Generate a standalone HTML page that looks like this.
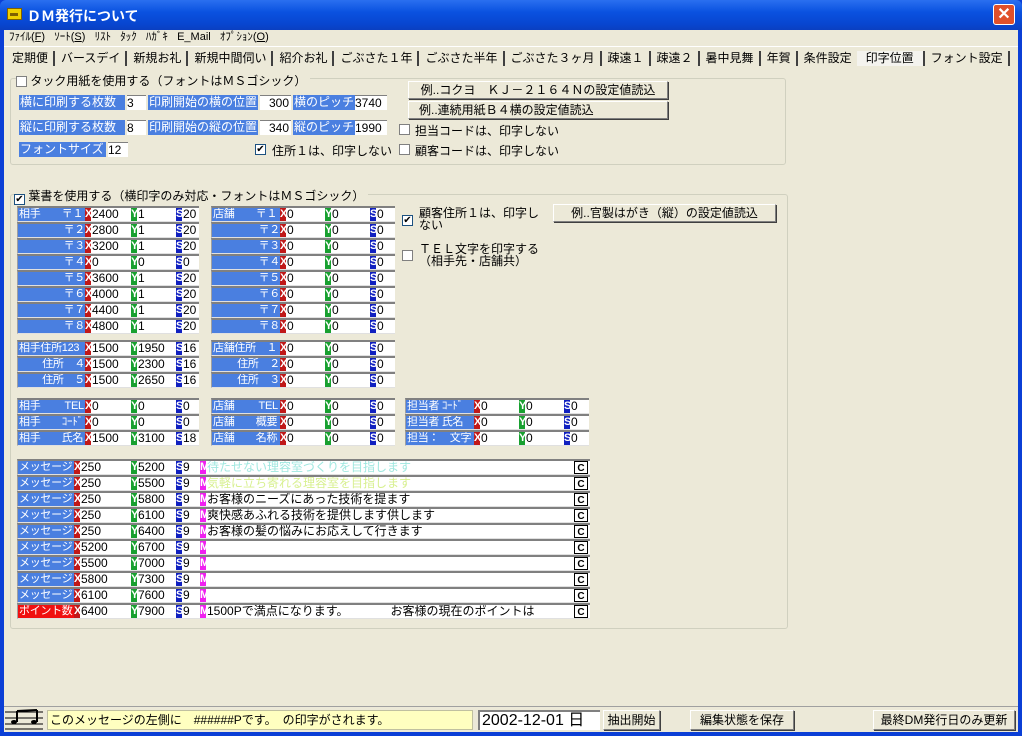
<!DOCTYPE html>
<html><head><meta charset="utf-8">
<style>
*{margin:0;padding:0;box-sizing:border-box}
body{width:1022px;height:736px;overflow:hidden;background:#0b3fd6;font-family:"Liberation Sans","Noto Sans CJK JP",sans-serif;font-size:12px;color:#000;position:relative}
.a{position:absolute;white-space:nowrap}
#win{position:absolute;left:4px;top:30px;width:1014px;height:702px;background:#ece9d8}
#title{position:absolute;left:0;top:0;width:1022px;height:30px;background:linear-gradient(#2a6ff0,#0a52e0 40%,#0846d0 80%,#0a3fc0);border-radius:6px 6px 0 0}
.r{position:absolute;height:16px;background:#fff;border-top:2px solid #808080;border-left:1px solid #a0a0a0;border-bottom:1px solid #e0e0e0;line-height:13px;font-size:12px;white-space:nowrap}
.r span{position:absolute;top:0;height:13px;white-space:nowrap;overflow:hidden}
.l{left:0;background:#4a7fe0;color:#fff;padding-left:1px;font-size:11px;letter-spacing:-0.3px}
.x,.y,.s,.m{width:6px;color:#fff;font-weight:bold;font-size:11px;overflow:hidden;text-align:center}
.x{background:#c01818}.y{background:#18a030}.s{background:#1020c0}.m{background:#f020f0}
.c{width:14px;border:1px solid #000;font-weight:bold;text-align:center;font-size:10px;background:#fff}
.btn{position:absolute;background:#ece9d8;border:1px solid;border-color:#fff #808080 #808080 #fff;box-shadow:1px 1px 0 #404040;text-align:center;line-height:16px;white-space:nowrap}
.cb{position:absolute;width:11px;height:11px;border:1px solid #1c5180;background:#fff;font-size:10px;line-height:9px;text-align:center}
.grp{position:absolute;border:1px solid #d0d0bf;border-radius:3px}
.tab{display:inline-block;padding:0 5px 0 6px;border-right:2px solid #404040;line-height:15px;font-size:12px}
.bl{position:absolute;height:15px;background:#4a7fe0;color:#fff;line-height:15px;white-space:nowrap;overflow:hidden;padding-left:1px}
.wf{position:absolute;height:15px;background:#fff;border-top:1px solid #808080;line-height:14px}
</style></head><body>
<div id="title">
<div class="a" style="left:7px;top:8px;width:15px;height:12px;background:#f0d000;border:1px solid #806000"></div>
<div class="a" style="left:10px;top:13px;width:8px;height:3px;background:#806000"></div>
<div class="a" style="left:27px;top:6px;color:#fff;font-weight:bold;font-size:14px">ＤＭ発行について</div>
<div class="a" style="left:993px;top:4px;width:22px;height:21px;background:#e0502a;border:1px solid #fff;border-radius:3px;color:#fff;text-align:center;font-weight:bold;font-size:16px;line-height:19px">✕</div>
</div>
<div id="win">
<div class="a" style="left:5px;top:0px;line-height:14px;font-size:11px">ﾌｧｲﾙ(<u>F</u>) &nbsp; ｿｰﾄ(<u>S</u>) &nbsp; ﾘｽﾄ &nbsp; ﾀｯｸ &nbsp; ﾊｶﾞｷ &nbsp; E_Mail &nbsp; ｵﾌﾟｼｮﾝ(<u>O</u>)</div>
<div class="a" style="left:0;top:16px;width:1014px;height:1px;background:#fff"></div>
<div class="a" style="left:2px;top:21px"><span class="tab">定期便</span><span class="tab">バースデイ</span><span class="tab">新規お礼</span><span class="tab">新規中間伺い</span><span class="tab">紹介お礼</span><span class="tab">ごぶさた１年</span><span class="tab">ごぶさた半年</span><span class="tab">ごぶさた３ヶ月</span><span class="tab">疎遠１</span><span class="tab">疎遠２</span><span class="tab">暑中見舞</span><span class="tab">年賀</span><span class="tab" style="border:0">条件設定</span><span class="tab" style="background:#f4f3ee;padding:0 9px 0 9px">印字位置</span><span class="tab">フォント設定</span></div>

<div class="grp" style="left:6px;top:48px;width:776px;height:87px"></div>
<div class="a" style="left:12px;top:42px;background:#ece9d8;padding-right:4px"><span class="cb" style="position:relative;display:inline-block;top:2px;border-color:#808080"></span> タック用紙を使用する（フォントはＭＳゴシック）</div>
</div>
<div class="bl" style="left:19px;top:95px;width:106px">横に印刷する枚数</div>
<div class="wf" style="left:127px;top:95px;width:19px">3</div>
<div class="bl" style="left:148px;top:95px;width:110px">印刷開始の横の位置</div>
<div class="wf" style="left:260px;top:95px;width:31px;text-align:right;padding-right:2px">300</div>
<div class="bl" style="left:293px;top:95px;width:62px">横のピッチ</div>
<div class="wf" style="left:355px;top:95px;width:32px">3740</div>
<div class="bl" style="left:19px;top:120px;width:106px">縦に印刷する枚数</div>
<div class="wf" style="left:127px;top:120px;width:19px">8</div>
<div class="bl" style="left:148px;top:120px;width:110px">印刷開始の縦の位置</div>
<div class="wf" style="left:260px;top:120px;width:31px;text-align:right;padding-right:2px">340</div>
<div class="bl" style="left:293px;top:120px;width:62px">縦のピッチ</div>
<div class="wf" style="left:355px;top:120px;width:32px">1990</div>
<div class="bl" style="left:19px;top:142px;width:87px">フォントサイズ</div>
<div class="wf" style="left:108px;top:142px;width:20px">12</div>
<div class="cb" style="left:255px;top:144px">✔</div><div class="a" style="left:272px;top:142px">住所１は、印字しない</div>
<div class="cb" style="left:399px;top:124px;border-color:#808080"></div><div class="a" style="left:415px;top:122px">担当コードは、印字しない</div>
<div class="cb" style="left:399px;top:144px;border-color:#808080"></div><div class="a" style="left:415px;top:142px">顧客コードは、印字しない</div>
<div class="btn" style="left:408px;top:81px;width:260px;height:18px">例..コクヨ　ＫＪ－２１６４Ｎの設定値読込</div>
<div class="btn" style="left:408px;top:101px;width:260px;height:18px;text-align:left;padding-left:10px">例..連続用紙Ｂ４横の設定値読込</div>

<div class="grp" style="left:10px;top:194px;width:778px;height:435px"></div>
<div class="a" style="left:14px;top:187px;background:#ece9d8;padding-right:4px"><span class="cb" style="position:relative;display:inline-block;top:2px">✔</span> 葉書を使用する（横印字のみ対応・フォントはＭＳゴシック）</div>
<div class="cb" style="left:402px;top:215px">✔</div><div class="a" style="left:419px;top:207px;line-height:12px">顧客住所１は、印字し<br>ない</div>
<div class="cb" style="left:402px;top:250px;border-color:#808080"></div><div class="a" style="left:419px;top:243px;line-height:12px">ＴＥＬ文字を印字する<br>（相手先・店舗共）</div>
<div class="btn" style="left:553px;top:204px;width:223px;height:18px">例..官製はがき（縦）の設定値読込</div>

<!-- left column -->
<div class="r" style="left:17px;top:206px;width:182px"><span class="l" style="width:67px">相手　　〒１</span><span class="x" style="left:67px">X</span><span style="left:74px">2400</span><span class="y" style="left:113px">Y</span><span style="left:120px">1</span><span class="s" style="left:158px">S</span><span style="left:165px">20</span></div>
<div class="r" style="left:17px;top:222px;width:182px"><span class="l" style="width:67px;text-align:right">〒２</span><span class="x" style="left:67px">X</span><span style="left:74px">2800</span><span class="y" style="left:113px">Y</span><span style="left:120px">1</span><span class="s" style="left:158px">S</span><span style="left:165px">20</span></div>
<div class="r" style="left:17px;top:238px;width:182px"><span class="l" style="width:67px;text-align:right">〒３</span><span class="x" style="left:67px">X</span><span style="left:74px">3200</span><span class="y" style="left:113px">Y</span><span style="left:120px">1</span><span class="s" style="left:158px">S</span><span style="left:165px">20</span></div>
<div class="r" style="left:17px;top:254px;width:182px"><span class="l" style="width:67px;text-align:right">〒４</span><span class="x" style="left:67px">X</span><span style="left:74px">0</span><span class="y" style="left:113px">Y</span><span style="left:120px">0</span><span class="s" style="left:158px">S</span><span style="left:165px">0</span></div>
<div class="r" style="left:17px;top:270px;width:182px"><span class="l" style="width:67px;text-align:right">〒５</span><span class="x" style="left:67px">X</span><span style="left:74px">3600</span><span class="y" style="left:113px">Y</span><span style="left:120px">1</span><span class="s" style="left:158px">S</span><span style="left:165px">20</span></div>
<div class="r" style="left:17px;top:286px;width:182px"><span class="l" style="width:67px;text-align:right">〒６</span><span class="x" style="left:67px">X</span><span style="left:74px">4000</span><span class="y" style="left:113px">Y</span><span style="left:120px">1</span><span class="s" style="left:158px">S</span><span style="left:165px">20</span></div>
<div class="r" style="left:17px;top:302px;width:182px"><span class="l" style="width:67px;text-align:right">〒７</span><span class="x" style="left:67px">X</span><span style="left:74px">4400</span><span class="y" style="left:113px">Y</span><span style="left:120px">1</span><span class="s" style="left:158px">S</span><span style="left:165px">20</span></div>
<div class="r" style="left:17px;top:318px;width:182px"><span class="l" style="width:67px;text-align:right">〒８</span><span class="x" style="left:67px">X</span><span style="left:74px">4800</span><span class="y" style="left:113px">Y</span><span style="left:120px">1</span><span class="s" style="left:158px">S</span><span style="left:165px">20</span></div>
<div class="r" style="left:17px;top:340px;width:182px"><span class="l" style="width:67px">相手住所123</span><span class="x" style="left:67px">X</span><span style="left:74px">1500</span><span class="y" style="left:113px">Y</span><span style="left:120px">1950</span><span class="s" style="left:158px">S</span><span style="left:165px">16</span></div>
<div class="r" style="left:17px;top:356px;width:182px"><span class="l" style="width:67px;text-align:right">住所　４</span><span class="x" style="left:67px">X</span><span style="left:74px">1500</span><span class="y" style="left:113px">Y</span><span style="left:120px">2300</span><span class="s" style="left:158px">S</span><span style="left:165px">16</span></div>
<div class="r" style="left:17px;top:372px;width:182px"><span class="l" style="width:67px;text-align:right">住所　５</span><span class="x" style="left:67px">X</span><span style="left:74px">1500</span><span class="y" style="left:113px">Y</span><span style="left:120px">2650</span><span class="s" style="left:158px">S</span><span style="left:165px">16</span></div>
<div class="r" style="left:17px;top:398px;width:182px"><span class="l" style="width:67px">相手　　 TEL</span><span class="x" style="left:67px">X</span><span style="left:74px">0</span><span class="y" style="left:113px">Y</span><span style="left:120px">0</span><span class="s" style="left:158px">S</span><span style="left:165px">0</span></div>
<div class="r" style="left:17px;top:414px;width:182px"><span class="l" style="width:67px">相手　　ｺｰﾄﾞ</span><span class="x" style="left:67px">X</span><span style="left:74px">0</span><span class="y" style="left:113px">Y</span><span style="left:120px">0</span><span class="s" style="left:158px">S</span><span style="left:165px">0</span></div>
<div class="r" style="left:17px;top:430px;width:182px"><span class="l" style="width:67px">相手　　氏名</span><span class="x" style="left:67px">X</span><span style="left:74px">1500</span><span class="y" style="left:113px">Y</span><span style="left:120px">3100</span><span class="s" style="left:158px">S</span><span style="left:165px">18</span></div>

<!-- right column -->
<div class="r" style="left:211px;top:206px;width:184px"><span class="l" style="width:68px">店舗　　〒１</span><span class="x" style="left:68px">X</span><span style="left:75px">0</span><span class="y" style="left:113px">Y</span><span style="left:120px">0</span><span class="s" style="left:158px">S</span><span style="left:165px">0</span></div>
<div class="r" style="left:211px;top:222px;width:184px"><span class="l" style="width:68px;text-align:right">〒２</span><span class="x" style="left:68px">X</span><span style="left:75px">0</span><span class="y" style="left:113px">Y</span><span style="left:120px">0</span><span class="s" style="left:158px">S</span><span style="left:165px">0</span></div>
<div class="r" style="left:211px;top:238px;width:184px"><span class="l" style="width:68px;text-align:right">〒３</span><span class="x" style="left:68px">X</span><span style="left:75px">0</span><span class="y" style="left:113px">Y</span><span style="left:120px">0</span><span class="s" style="left:158px">S</span><span style="left:165px">0</span></div>
<div class="r" style="left:211px;top:254px;width:184px"><span class="l" style="width:68px;text-align:right">〒４</span><span class="x" style="left:68px">X</span><span style="left:75px">0</span><span class="y" style="left:113px">Y</span><span style="left:120px">0</span><span class="s" style="left:158px">S</span><span style="left:165px">0</span></div>
<div class="r" style="left:211px;top:270px;width:184px"><span class="l" style="width:68px;text-align:right">〒５</span><span class="x" style="left:68px">X</span><span style="left:75px">0</span><span class="y" style="left:113px">Y</span><span style="left:120px">0</span><span class="s" style="left:158px">S</span><span style="left:165px">0</span></div>
<div class="r" style="left:211px;top:286px;width:184px"><span class="l" style="width:68px;text-align:right">〒６</span><span class="x" style="left:68px">X</span><span style="left:75px">0</span><span class="y" style="left:113px">Y</span><span style="left:120px">0</span><span class="s" style="left:158px">S</span><span style="left:165px">0</span></div>
<div class="r" style="left:211px;top:302px;width:184px"><span class="l" style="width:68px;text-align:right">〒７</span><span class="x" style="left:68px">X</span><span style="left:75px">0</span><span class="y" style="left:113px">Y</span><span style="left:120px">0</span><span class="s" style="left:158px">S</span><span style="left:165px">0</span></div>
<div class="r" style="left:211px;top:318px;width:184px"><span class="l" style="width:68px;text-align:right">〒８</span><span class="x" style="left:68px">X</span><span style="left:75px">0</span><span class="y" style="left:113px">Y</span><span style="left:120px">0</span><span class="s" style="left:158px">S</span><span style="left:165px">0</span></div>
<div class="r" style="left:211px;top:340px;width:184px"><span class="l" style="width:68px">店舗住所　１</span><span class="x" style="left:68px">X</span><span style="left:75px">0</span><span class="y" style="left:113px">Y</span><span style="left:120px">0</span><span class="s" style="left:158px">S</span><span style="left:165px">0</span></div>
<div class="r" style="left:211px;top:356px;width:184px"><span class="l" style="width:68px;text-align:right">住所　２</span><span class="x" style="left:68px">X</span><span style="left:75px">0</span><span class="y" style="left:113px">Y</span><span style="left:120px">0</span><span class="s" style="left:158px">S</span><span style="left:165px">0</span></div>
<div class="r" style="left:211px;top:372px;width:184px"><span class="l" style="width:68px;text-align:right">住所　３</span><span class="x" style="left:68px">X</span><span style="left:75px">0</span><span class="y" style="left:113px">Y</span><span style="left:120px">0</span><span class="s" style="left:158px">S</span><span style="left:165px">0</span></div>
<div class="r" style="left:211px;top:398px;width:184px"><span class="l" style="width:68px">店舗　　 TEL</span><span class="x" style="left:68px">X</span><span style="left:75px">0</span><span class="y" style="left:113px">Y</span><span style="left:120px">0</span><span class="s" style="left:158px">S</span><span style="left:165px">0</span></div>
<div class="r" style="left:211px;top:414px;width:184px"><span class="l" style="width:68px">店舗　　概要</span><span class="x" style="left:68px">X</span><span style="left:75px">0</span><span class="y" style="left:113px">Y</span><span style="left:120px">0</span><span class="s" style="left:158px">S</span><span style="left:165px">0</span></div>
<div class="r" style="left:211px;top:430px;width:184px"><span class="l" style="width:68px">店舗　　名称</span><span class="x" style="left:68px">X</span><span style="left:75px">0</span><span class="y" style="left:113px">Y</span><span style="left:120px">0</span><span class="s" style="left:158px">S</span><span style="left:165px">0</span></div>

<div class="r" style="left:405px;top:398px;width:184px"><span class="l" style="width:68px">担当者 ｺｰﾄﾞ</span><span class="x" style="left:68px">X</span><span style="left:75px">0</span><span class="y" style="left:113px">Y</span><span style="left:120px">0</span><span class="s" style="left:158px">S</span><span style="left:165px">0</span></div>
<div class="r" style="left:405px;top:414px;width:184px"><span class="l" style="width:68px">担当者 氏名</span><span class="x" style="left:68px">X</span><span style="left:75px">0</span><span class="y" style="left:113px">Y</span><span style="left:120px">0</span><span class="s" style="left:158px">S</span><span style="left:165px">0</span></div>
<div class="r" style="left:405px;top:430px;width:184px"><span class="l" style="width:68px">担当：　文字</span><span class="x" style="left:68px">X</span><span style="left:75px">0</span><span class="y" style="left:113px">Y</span><span style="left:120px">0</span><span class="s" style="left:158px">S</span><span style="left:165px">0</span></div>

<!-- messages -->
<div class="r" style="left:17px;top:459px;width:573px"><span class="l" style="width:56px">メッセージ</span><span class="x" style="left:56px">X</span><span style="left:63px">250</span><span class="y" style="left:113px">Y</span><span style="left:120px">5200</span><span class="s" style="left:158px">S</span><span style="left:165px">9</span><span class="m" style="left:182px">M</span><span style="left:189px;color:#a0e8e0">待たせない理容室づくりを目指します</span><span class="c" style="left:556px">C</span></div>
<div class="r" style="left:17px;top:475px;width:573px"><span class="l" style="width:56px">メッセージ</span><span class="x" style="left:56px">X</span><span style="left:63px">250</span><span class="y" style="left:113px">Y</span><span style="left:120px">5500</span><span class="s" style="left:158px">S</span><span style="left:165px">9</span><span class="m" style="left:182px">M</span><span style="left:189px;color:#d8f090">気軽に立ち寄れる理容室を目指します</span><span class="c" style="left:556px">C</span></div>
<div class="r" style="left:17px;top:491px;width:573px"><span class="l" style="width:56px">メッセージ</span><span class="x" style="left:56px">X</span><span style="left:63px">250</span><span class="y" style="left:113px">Y</span><span style="left:120px">5800</span><span class="s" style="left:158px">S</span><span style="left:165px">9</span><span class="m" style="left:182px">M</span><span style="left:189px">お客様のニーズにあった技術を提ます</span><span class="c" style="left:556px">C</span></div>
<div class="r" style="left:17px;top:507px;width:573px"><span class="l" style="width:56px">メッセージ</span><span class="x" style="left:56px">X</span><span style="left:63px">250</span><span class="y" style="left:113px">Y</span><span style="left:120px">6100</span><span class="s" style="left:158px">S</span><span style="left:165px">9</span><span class="m" style="left:182px">M</span><span style="left:189px">爽快感あふれる技術を提供します供します</span><span class="c" style="left:556px">C</span></div>
<div class="r" style="left:17px;top:523px;width:573px"><span class="l" style="width:56px">メッセージ</span><span class="x" style="left:56px">X</span><span style="left:63px">250</span><span class="y" style="left:113px">Y</span><span style="left:120px">6400</span><span class="s" style="left:158px">S</span><span style="left:165px">9</span><span class="m" style="left:182px">M</span><span style="left:189px">お客様の髪の悩みにお応えして行きます</span><span class="c" style="left:556px">C</span></div>
<div class="r" style="left:17px;top:539px;width:573px"><span class="l" style="width:56px">メッセージ</span><span class="x" style="left:56px">X</span><span style="left:63px">5200</span><span class="y" style="left:113px">Y</span><span style="left:120px">6700</span><span class="s" style="left:158px">S</span><span style="left:165px">9</span><span class="m" style="left:182px">M</span><span class="c" style="left:556px">C</span></div>
<div class="r" style="left:17px;top:555px;width:573px"><span class="l" style="width:56px">メッセージ</span><span class="x" style="left:56px">X</span><span style="left:63px">5500</span><span class="y" style="left:113px">Y</span><span style="left:120px">7000</span><span class="s" style="left:158px">S</span><span style="left:165px">9</span><span class="m" style="left:182px">M</span><span class="c" style="left:556px">C</span></div>
<div class="r" style="left:17px;top:571px;width:573px"><span class="l" style="width:56px">メッセージ</span><span class="x" style="left:56px">X</span><span style="left:63px">5800</span><span class="y" style="left:113px">Y</span><span style="left:120px">7300</span><span class="s" style="left:158px">S</span><span style="left:165px">9</span><span class="m" style="left:182px">M</span><span class="c" style="left:556px">C</span></div>
<div class="r" style="left:17px;top:587px;width:573px"><span class="l" style="width:56px">メッセージ</span><span class="x" style="left:56px">X</span><span style="left:63px">6100</span><span class="y" style="left:113px">Y</span><span style="left:120px">7600</span><span class="s" style="left:158px">S</span><span style="left:165px">9</span><span class="m" style="left:182px">M</span><span class="c" style="left:556px">C</span></div>
<div class="r" style="left:17px;top:603px;width:573px"><span class="l" style="width:56px;background:#f01010">ポイント数</span><span class="x" style="left:56px">X</span><span style="left:63px">6400</span><span class="y" style="left:113px">Y</span><span style="left:120px">7900</span><span class="s" style="left:158px">S</span><span style="left:165px">9</span><span class="m" style="left:182px">M</span><span style="left:189px">1500Pで満点になります。　　　　お客様の現在のポイントは</span><span class="c" style="left:556px">C</span></div>

<!-- status bar -->
<div class="a" style="left:4px;top:706px;width:1014px;height:1px;background:#a0a0a0"></div>
<svg class="a" style="left:5px;top:708px" width="38" height="24" viewBox="0 0 38 24"><g stroke="#000" fill="none" stroke-width="1"><line x1="0" y1="4" x2="38" y2="4"/><line x1="0" y1="10" x2="38" y2="10"/><line x1="0" y1="16" x2="38" y2="16"/><line x1="0" y1="21" x2="38" y2="21"/><line x1="12" y1="3" x2="12" y2="14" stroke-width="2"/><line x1="32" y1="2" x2="32" y2="14" stroke-width="2"/><line x1="12" y1="3" x2="32" y2="2" stroke-width="2"/></g><ellipse cx="9" cy="14" rx="3" ry="2" fill="#000"/><ellipse cx="29" cy="14" rx="3" ry="2" fill="#000"/></svg>
<div class="a" style="left:47px;top:710px;width:426px;height:20px;background:#ffffc0;border:1px solid #c0c0a0;line-height:18px;padding-left:2px">このメッセージの左側に　######Pです。　の印字がされます。</div>
<div class="a" style="left:478px;top:710px;width:122px;height:20px;background:#fff;border-top:2px solid #808080;border-left:2px solid #808080;font-size:16px;line-height:18px;padding-left:2px">2002-12-01 日</div>
<div class="btn" style="left:603px;top:710px;width:57px;height:20px;line-height:18px">抽出開始</div>
<div class="btn" style="left:690px;top:710px;width:104px;height:20px;line-height:18px">編集状態を保存</div>
<div class="btn" style="left:873px;top:710px;width:142px;height:20px;line-height:18px">最終DM発行日のみ更新</div>
</body></html>
